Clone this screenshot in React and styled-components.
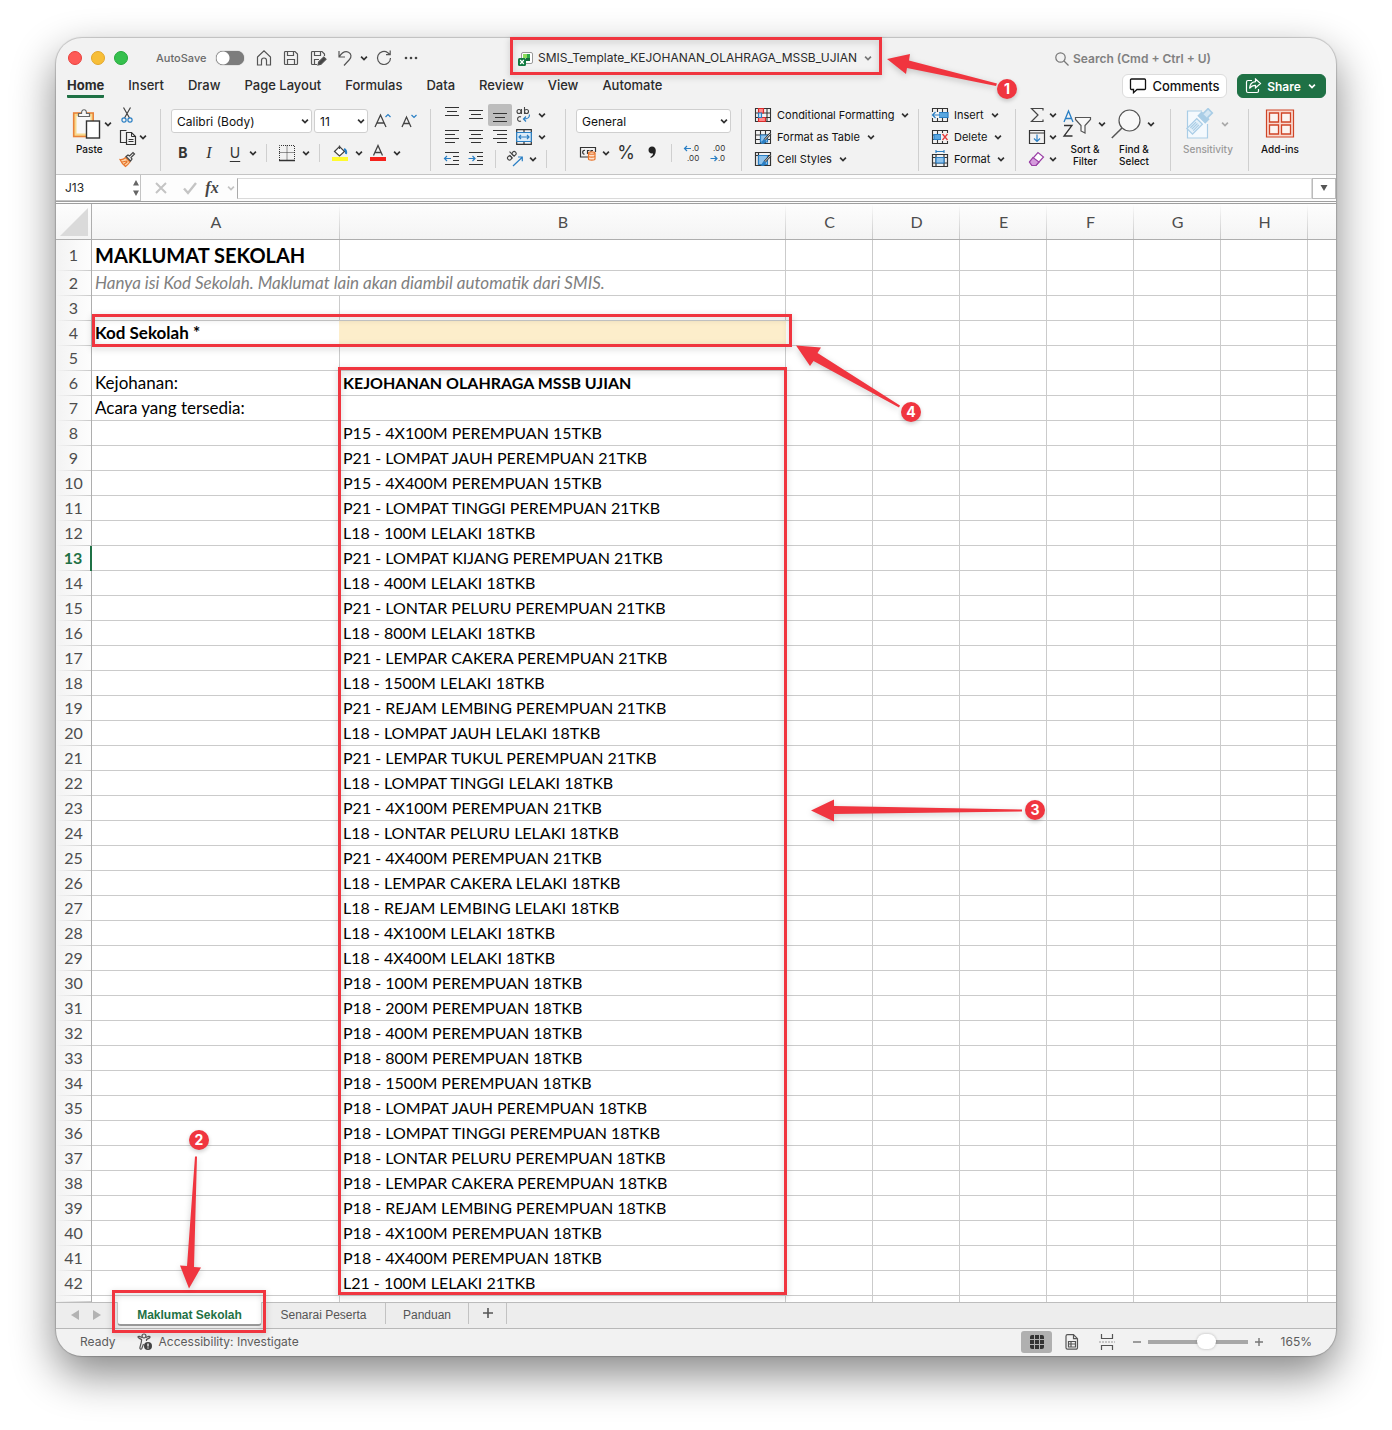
import React from "react";
import styled, { createGlobalStyle, css } from "styled-components";

const ui = `Inter, "Liberation Sans", sans-serif`;
const sheetFont = `Lato, "Liberation Sans", sans-serif`;
const red = "#f0353f";
const green = "#1f7145";

const Global = createGlobalStyle`
  *, *::before, *::after { box-sizing: border-box; }
  body { margin: 0; background: #fff; font-family: ${ui}; color: #262626; }
  button, input, select { font: inherit; color: inherit; }
`;

/* ---------- window ---------- */
const Page = styled.main`
  padding: 38px 56px 74px;
`;
const Stage = styled.div`
  position: relative;
`;
const Frame = styled.div`
  border-radius: 26px;
  overflow: hidden;
  background: #f2f2f2;
  box-shadow: 0 0 1px 1px rgba(0, 0, 0, 0.18), 0 18px 44px rgba(0, 0, 0, 0.48);
`;
const PlainButton = styled.button`
  display: inline-flex;
  align-items: center;
  justify-content: center;
  padding: 0;
  border: 0;
  background: none;
`;

/* ---------- title bar ---------- */
const TitleBar = styled.header`
  display: grid;
  grid-template-columns: 1fr auto 1fr;
  align-items: center;
  height: 36px;
  padding-top: 4px;
`;
const TitleLeft = styled.div`
  display: flex;
  align-items: center;
  padding-left: 12px;
`;
const Light = styled.button`
  width: 14px;
  height: 14px;
  margin-right: 9px;
  padding: 0;
  border: 1px solid ${(p) => p.$edge};
  border-radius: 50%;
  background: ${(p) => p.$fill};
`;
const AutoSave = styled.label`
  display: flex;
  align-items: center;
  gap: 10px;
  margin: 0 6px 0 19px;
  font-size: 11px;
  font-weight: 500;
  line-height: 16px;
  color: #6a6a6a;
`;
const Switch = styled.input`
  appearance: none;
  width: 28px;
  height: 14px;
  margin: 0;
  border-radius: 7px;
  background: radial-gradient(circle at 7px 7px, #fff 6px, transparent 7px), #7c7c7c;
  box-shadow: 0 0 1px #555;
`;
const Quick = styled(PlainButton)`
  width: ${(p) => p.$w || 27}px;
  height: 22px;
  color: #555;
`;
const DocTitle = styled(PlainButton)`
  gap: 5px;
  font-size: 12px;
  line-height: 16px;
  color: #2b2b2b;
  white-space: nowrap;
`;
const Search = styled.label`
  display: flex;
  align-items: center;
  gap: 4px;
  justify-self: end;
  padding: 2px 117px 0 0;
  color: #777;
`;
const SearchInput = styled.input`
  width: 146px;
  padding: 0;
  border: 0;
  outline: 0;
  background: none;
  font-size: 12px;
  font-weight: 600;
  line-height: 20px;
  &::placeholder { color: #808080; opacity: 1; }
`;

/* ---------- ribbon tabs ---------- */
const TabRow = styled.nav`
  display: flex;
  align-items: stretch;
  height: 24px;
  padding: 0 10px 0 11px;
`;
const Tabs = styled.div`
  display: flex;
  gap: 24px;
  flex: 1;
`;
const RibbonTab = styled.a`
  height: 24px;
  border-bottom: 3px solid ${(p) => (p.$active ? green : "transparent")};
  border-radius: 1px;
  font-size: 13px;
  font-weight: ${(p) => (p.$active ? 700 : 500)};
  line-height: 22px;
  color: #2b2b2b;
  text-decoration: none;
  white-space: nowrap;
`;
const Pill = styled(PlainButton)`
  gap: 5px;
  height: 24px;
  width: ${(p) => p.$w}px;
  margin-left: 10px;
  border: 1px solid ${(p) => (p.$primary ? green : "#dcdcdc")};
  border-radius: 6px;
  background: ${(p) => (p.$primary ? green : "#fff")};
  color: ${(p) => (p.$primary ? "#fff" : "#111")};
  font-size: ${(p) => (p.$primary ? 12 : 13)}px;
  font-weight: ${(p) => (p.$primary ? 600 : 500)};
`;

/* ---------- ribbon ---------- */
const Ribbon = styled.section`
  display: flex;
  height: 77px;
  padding: 6px 0 0 6px;
  border-bottom: 1px solid #c4c4c4;
`;
const Group = styled.div`
  display: flex;
  gap: ${(p) => p.$gap || 0}px;
  flex: none;
  width: ${(p) => p.$w}px;
  padding-left: ${(p) => p.$pad}px;
`;
const Divider = styled.span`
  flex: none;
  width: 1px;
  height: 62px;
  margin-top: 5px;
  background: #cfcfcf;
`;
const SmallDivider = styled.span`
  flex: none;
  width: 1px;
  height: 18px;
  margin: 0 7px;
  background: #cfcfcf;
`;
const Stack = styled.div`
  display: flex;
  flex-direction: column;
`;
const TwoRows = styled(Stack)`
  gap: 8px;
  padding-top: 5px;
`;
const Row = styled.div`
  display: flex;
  align-items: center;
  height: ${(p) => p.$h || 22}px;
`;
const Tool = styled(PlainButton)`
  flex: none;
  width: ${(p) => p.$w || 24}px;
  height: 22px;
  border-radius: 2px;
  background: ${(p) => (p.$on ? "#bdbdbd" : "none")};
  color: #333;
  font-size: 14px;
`;
const Letter = styled.span`
  font-size: ${(p) => p.$size || 14}px;
  line-height: 16px;
  ${(p) => p.$bold && css`font-weight: 700;`}
  ${(p) => p.$italic && css`font-family: "Liberation Serif", serif; font-style: italic;`}
  ${(p) => p.$under && css`text-decoration: underline; text-underline-offset: 3px;`}
`;
const SelectBox = styled.label`
  position: relative;
  display: block;
  width: ${(p) => p.$w}px;
  height: 24px;
  margin-right: ${(p) => p.$mr || 0}px;
  svg { position: absolute; right: 1px; top: 6px; pointer-events: none; }
`;
const Select = styled.select`
  appearance: none;
  width: 100%;
  height: 24px;
  padding: 0 5px;
  border: 1px solid #cfcfcf;
  border-radius: 3px;
  background: #fff;
  color: #111;
  font-size: 12px;
`;
const Labelled = styled(PlainButton)`
  justify-content: flex-start;
  gap: 5px;
  height: 22px;
  font-size: 11px;
  color: #111;
  white-space: nowrap;
`;
const Large = styled(PlainButton)`
  flex-direction: column;
  align-items: ${(p) => (p.$start ? "flex-start" : "center")};
  justify-content: flex-start;
  flex: none;
  width: ${(p) => p.$w || 46}px;
  height: 66px;
  padding-top: 3px;
  font-size: 10px;
  font-weight: 500;
  line-height: 12px;
  color: ${(p) => (p.$dim ? "#9a9a9a" : "#111")};
`;
const LargeIcon = styled.span`
  display: flex;
  align-items: center;
  gap: ${(p) => p.$gap || 0}px;
  height: 34px;
  margin-bottom: 2px;
`;
const PasteLabel = styled.span`
  padding-left: 4px;
`;

/* ---------- formula bar ---------- */
const FormulaBar = styled.section`
  display: flex;
  align-items: center;
  height: 29px;
  padding-bottom: 3px;
  background: linear-gradient(#9f9f9f, #9f9f9f) 0 26px / 100% 1px no-repeat,
    linear-gradient(#9f9f9f, #9f9f9f) 0 28px / 100% 1px no-repeat, #fdfdfd;
`;
const NameBox = styled.div`
  display: flex;
  align-items: center;
  width: 85px;
  height: 26px;
  padding-left: 9px;
  border: solid #c4c4c4;
  border-width: 0 1px 1px 0;
  background: #fff;
`;
const NameInput = styled.input`
  flex: 1;
  min-width: 0;
  padding: 0;
  border: 0;
  background: none;
  font-size: 12px;
`;
const FxButton = styled(PlainButton)`
  width: ${(p) => p.$w}px;
  height: 24px;
  color: #c4c4c4;
`;
const Fx = styled.span`
  font: italic 700 16px "Liberation Serif", serif;
  color: #444;
`;
const FormulaInput = styled.input`
  flex: 1;
  min-width: 0;
  height: 21px;
  border: 1px solid #dadada;
  border-left-color: #aaa;
  background: #fff;
`;
const Expand = styled(PlainButton)`
  width: 24px;
  height: 21px;
  border: 1px solid #bbb;
  background: #fff;
  color: #555;
`;

/* ---------- grid ---------- */
const Grid = styled.table`
  width: 100%;
  table-layout: fixed;
  border-collapse: separate;
  border-spacing: 0;
  background: #fff;
  font-family: ${sheetFont};
  font-size: 16px;
  line-height: 20px;
`;
const Corner = styled.td`
  height: 36px;
  padding: 0;
  border: solid #aeaeae;
  border-width: 0 1px 1px 0;
  background: linear-gradient(#fdfdfd, #f4f4f4);
  vertical-align: middle;
  svg { display: block; margin: 0 auto; }
`;
const ColHead = styled.th`
  height: 36px;
  padding: 0;
  border-bottom: 1px solid #aeaeae;
  background: linear-gradient(rgba(200, 200, 200, 0), #c9c9c9) right top / 1px 100% no-repeat,
    linear-gradient(#fdfdfd, #f4f4f4);
  font-weight: 400;
  color: #4d4d4d;
  &:last-child { background: linear-gradient(#fdfdfd, #f4f4f4); }
`;
const RowHead = styled.th`
  height: ${(p) => p.$h}px;
  padding: 0 0 2px;
  border-right: ${(p) => (p.$active ? "2px solid #1f7145" : "1px solid #aeaeae")};
  background: linear-gradient(90deg, rgba(200, 200, 200, 0), #c9c9c9) left bottom / 100% 1px no-repeat,
    linear-gradient(90deg, #f3f3f3, #fdfdfd);
  font-weight: ${(p) => (p.$active ? 700 : 400)};
  color: ${(p) => (p.$active ? green : "#4d4d4d")};
`;
const Cell = styled.td`
  height: ${(p) => p.$h}px;
  padding: 0 3px;
  border: solid #cbcbcb;
  border-width: 0 1px 1px 0;
  color: #000;
  white-space: nowrap;
  overflow: hidden;
  &:last-child { border-right-width: 0; }
  ${(p) => p.$kind === "title" && css`font-size: 20px; font-weight: 700;`}
  ${(p) => p.$kind === "note" && css`font-size: 17px; font-style: italic; color: #808080;`}
  ${(p) => p.$kind === "label" && css`font-size: 17px;`}
  ${(p) => p.$kind === "bold" && css`font-weight: 700;`}
  ${(p) => p.$kind === "fill" && css`background: #fdeecb; border-color: #fdeecb;`}
  ${(p) => p.$kind === "key" && css`font-size: 17px; font-weight: 700; border-right-color: #fdeecb;`}
`;

/* ---------- sheet tabs & status ---------- */
const SheetBar = styled.nav`
  display: flex;
  height: 27px;
  padding-left: 8px;
  background: linear-gradient(#bdbdbd, #bdbdbd) 0 0 / 100% 1px no-repeat, #ededed;
  border-bottom: 1px solid #b8b8b8;
`;
const SheetNav = styled(PlainButton)`
  width: 22px;
  height: 26px;
  color: #b3b3b3;
`;
const SheetTab = styled.button`
  width: ${(p) => p.$w}px;
  height: ${(p) => (p.$active ? 24 : 21)}px;
  margin-left: ${(p) => (p.$active ? 9 : 0)}px;
  margin-top: ${(p) => (p.$active ? 0 : 1)}px;
  padding: ${(p) => (p.$active ? "4px 0 0" : "3px 0 0")};
  border: solid #c2c2c2;
  border-width: ${(p) => (p.$active ? "0 1px 2px" : "0 1px 0 0")};
  border-color: ${(p) => (p.$active ? "#ccc #ccc #999" : "#c2c2c2")};
  border-radius: ${(p) => (p.$active ? "0 0 4px 4px" : "0")};
  background: ${(p) => (p.$active ? "#fff" : "none")};
  color: ${(p) => (p.$active ? "#1f7145" : "#555")};
  font-family: "Liberation Sans", sans-serif;
  font-size: 12px;
  font-weight: ${(p) => (p.$active ? 700 : 400)};
  line-height: 18px;
  white-space: nowrap;
`;
const StatusBar = styled.footer`
  display: flex;
  align-items: center;
  height: 27px;
  padding: 0 24px 2px;
  font-size: 12px;
  line-height: 16px;
  color: #5c5c5c;
`;
const Access = styled(PlainButton)`
  gap: 6px;
  margin-left: 21px;
`;
const Spacer = styled.span`
  flex: 1;
`;
const ViewButton = styled(PlainButton)`
  width: 31px;
  height: 22px;
  margin-right: 4px;
  border-radius: 3px;
  background: ${(p) => (p.$on ? "#b0b0b0" : "none")};
`;
const ZoomStep = styled(PlainButton)`
  width: 22px;
  height: 22px;
  color: #777;
`;
const Zoom = styled.input`
  appearance: none;
  width: 100px;
  height: 16px;
  margin: 0;
  background: linear-gradient(#a8a8a8, #a8a8a8) 0 6px / 100% 4px no-repeat;
  &::-webkit-slider-thumb {
    appearance: none;
    width: 19px;
    height: 15px;
    border-radius: 8px;
    background: #fff;
    box-shadow: 0 0 3px rgba(0, 0, 0, 0.25);
  }
`;
const Percent = styled.output`
  width: 42px;
  text-align: right;
`;

/* ---------- annotations ---------- */
const Callout = styled.div`
  position: absolute;
  left: ${(p) => p.$x}px;
  top: ${(p) => p.$y}px;
  width: ${(p) => p.$w}px;
  height: ${(p) => p.$h}px;
  border: 3px solid ${red};
  filter: drop-shadow(0 2px 3px rgba(0, 0, 0, 0.2));
  pointer-events: none;
`;
const Arrows = styled.svg`
  position: absolute;
  left: 0;
  top: 0;
  width: 1280px;
  height: 1318px;
  pointer-events: none;
  filter: drop-shadow(0 2px 3px rgba(0, 0, 0, 0.2));
`;
const Badge = styled.span`
  position: absolute;
  left: ${(p) => p.$x}px;
  top: ${(p) => p.$y}px;
  width: 20px;
  height: 20px;
  border-radius: 50%;
  background: ${red};
  color: #fff;
  font-size: 14px;
  font-weight: 700;
  line-height: 20px;
  text-align: center;
  box-shadow: 0 2px 4px rgba(0, 0, 0, 0.2);
`;

/* ---------- icons ---------- */
const Svg = ({ w = 18, h = 18, children, ...rest }) => (
  <svg width={w} height={h} viewBox={`0 0 ${w} ${h}`} fill="none" stroke="currentColor" strokeWidth="1.2" aria-hidden="true" {...rest}>
    {children}
  </svg>
);
const Chev = ({ color = "#333" }) => (
  <Svg w={12} h={12} stroke={color} strokeWidth="1.7"><path d="M3.1 4.600 6 7.500l2.900-2.900" /></Svg>
);
const Lines = ({ rows }) => (
  <Svg stroke="#333" w={18} h={18}>
    {rows.map(([x, y, l]) => <path key={y} d={`M${x} ${y}.5h${l}`} />)}
  </Svg>
);
const blue = "#2a7fc4";

const HomeIcon = () => <Svg><path d="M2.5 8 9 1.8 15.500 8v8h-4v-4.500a2.500 2.500 0 0 0-5 0V16h-4z" /></Svg>;
const SaveIcon = () => <Svg><path d="M3.500 2.500h9.500l2.500 2.500v9.500a1 1 0 0 1-1 1h-11a1 1 0 0 1-1-1v-11a1 1 0 0 1 1-1zM5.500 2.500v4h6v-4M5.500 15.500v-5h7v5" /></Svg>;
const SaveAsIcon = () => (
  <Svg><path d="M8 15.500H3.500a1 1 0 0 1-1-1v-11a1 1 0 0 1 1-1h9.500l2.500 2.500v2M5.500 2.500v4h6v-4M5.500 15v-4.500H10" /><path d="M9 16l.8-3.200 5-4.800 2.200 2.200-5 5z" fill="#444" /></Svg>
);
const UndoIcon = () => <Svg><path d="M3 2v6h6M3.200 7.800C6 3.500 9.500 2 12.500 3.200c3 1.500 3.200 5 1 7.300L8 16.500" /></Svg>;
const RedoIcon = () => <Svg><path d="M15.500 9A6.500 6.500 0 1 1 12.800 3.700L15 5.500M15.200 1.500v4.200h-4.200" /></Svg>;
const Dots = () => <Svg fill="#444" stroke="none"><circle cx="4" cy="9" r="1.300" /><circle cx="9" cy="9" r="1.300" /><circle cx="14" cy="9" r="1.300" /></Svg>;
const FileIcon = () => (
  <Svg w={15} h={15} stroke="none">
    <rect x="3.500" y="1.500" width="11" height="11" rx="1.500" fill="#fff" stroke="#999" strokeWidth="1" />
    <path d="M5 3h4v4H5z" fill="#8ddc5c" /><path d="M9 3h3v4H9z" fill="#2fa84a" /><path d="M8 7h4v3H8z" fill="#156b3a" />
    <rect x="0" y="7" width="8" height="8" rx="1.500" fill="#107c41" />
    <path d="M2.200 9l3.600 4M5.800 9l-3.600 4" stroke="#fff" strokeWidth="1.200" />
  </Svg>
);
const Magnifier = () => <Svg w={14} h={14}><circle cx="5.500" cy="5.500" r="4.700" /><path d="M9 9l4.500 4.500" /></Svg>;
const CommentIcon = () => <Svg w={18} h={16} strokeWidth="1.300"><path d="M2.500 1h13a1 1 0 0 1 1 1v8.500a1 1 0 0 1-1 1H8l-3.500 3.200v-3.200h-2a1 1 0 0 1-1-1V2a1 1 0 0 1 1-1z" /></Svg>;
const ShareIcon = () => <Svg w={17} h={16}><path d="M7 2.500H3A1.500 1.500 0 0 0 1.500 4v9A1.500 1.500 0 0 0 3 14.500h9A1.500 1.500 0 0 0 13.500 13v-2" /><path d="M10.500 1l5 4.500-5 4.500V7.300C8 7.300 6 8.200 4.500 10.500 4.800 6.500 7 4 10.500 3.700z" /></Svg>;

const PasteIcon = () => (
  <Svg w={30} h={32}>
    <rect x="1.700" y="5" width="19.500" height="23.500" fill="#f9d98c" stroke="#e8833a" strokeWidth="1.600" />
    <rect x="4.500" y="8" width="14" height="17.500" fill="#f8f8f8" stroke="none" />
    <path d="M6.500 8.500v-3h3c0-5 5-5 5 0h3v3z" fill="#f8f8f8" stroke="#666" />
    <rect x="14.500" y="13" width="13" height="17" fill="#fff" stroke="#333" strokeWidth="1.400" />
  </Svg>
);
const CutIcon = () => <Svg><path d="M5.500 1.500 11.500 12M12.500 1.500 6.500 12" stroke="#444" /><circle cx="6" cy="14" r="2.100" stroke={blue} /><circle cx="12" cy="14" r="2.100" stroke={blue} /></Svg>;
const CopyIcon = () => (
  <Svg stroke="#333"><path d="M7 14.500H1.500v-12H7.500M7.500 4.500h5l4 4v8h-9z" /><path d="M12.500 4.500v4h4M9.500 11.500h5M9.500 13.500h5" strokeWidth="1" /></Svg>
);
const BrushIcon = () => (
  <Svg><path d="M2 9.500c3 .5 4-.5 5.500-2l4.500 4.500c-1.500 2-3 3.500-4.500 4.500-2-1.500-4-3.500-5.500-7z" fill="#fbd3a6" stroke="#e8762d" /><path d="M4 12l5-1M6 14.500l3.500-3" stroke="#e8762d" /><path d="M8 6.500l2-1.500 1.500 1L15 2.500l1.500 1.500L13 7.500l1 1.500-1.500 2z" fill="#eee" stroke="#444" /></Svg>
);
const GrowFont = ({ down }) => (
  <Svg w={20} h={18}>
    {down ? <><path d="M4 15 8.500 5 13 15M5.500 11.500h6" stroke="#444" strokeWidth="1.300" /><path d="M13.500 3l2.500 2.500L18.500 3" stroke={blue} /></>
      : <><path d="M3 15 8.500 3 14 15M5 11h7" stroke="#444" strokeWidth="1.300" /><path d="M13.500 5l2.500-2.500L18.500 5" stroke={blue} /></>}
  </Svg>
);
const BorderIcon = () => <Svg stroke="#333"><path d="M1.500 16V1.500h15V16M9 1.500V16M1.500 8.500h15" strokeDasharray="1 1" strokeWidth="1" /><path d="M1 16.500h16" strokeWidth="1.500" /></Svg>;
const FillIcon = () => (
  <Svg><path d="M3.500 7.500 8.500 2.500l5 5-5 4.500z" fill="#fff" stroke="#444" /><path d="M8.500 5V1.500" stroke="#444" /><path d="M13 5c2 1 2.500 3 2 5" stroke={blue} strokeWidth="2" /><path d="M1 13h16v4H1z" fill="#fffb2e" stroke="none" /></Svg>
);
const FontColor = () => <Svg><path d="M4.500 11.500 9 1.500l4.500 10M6 8.500h6" stroke="#444" strokeWidth="1.300" /><path d="M1 13h16v4H1z" fill="#f5221c" stroke="none" /></Svg>;
const WrapIcon = () => (
  <Svg><g stroke="#444" strokeWidth="1.100"><circle cx="4" cy="5.500" r="2" /><path d="M6.500 3v5M9.500 1v7" /><circle cx="11.500" cy="5.500" r="2" /><path d="M6 11a2.300 2.300 0 1 0 0 4" /></g><path d="M14.500 8.500c0 3-1 4.500-6 4.500M11 10.500 8.500 13l2.500 2.500" stroke={blue} /></Svg>
);
const MergeIcon = () => <Svg w={16} h={16}><path d="M.700.700h14.600v14.600H.700zM8 1v2.500M8 12.500V15" stroke="#333" /><path d="M.700 3.500h14.600v9H.700z" fill="#dcecf8" stroke={blue} /><path d="M3 8h10M5 6 3 8l2 2M11 6l2 2-2 2" stroke={blue} /></Svg>;
const IndentIcon = ({ out }) => (
  <Svg><path d="M2 2.500h14M10 6.500h6M10 10.500h6M2 14.500h14" stroke="#333" />{out ? <path d="M8 8.500H1.500M4 6 1.500 8.500 4 11" stroke={blue} /> : <path d="M1.500 8.500H8M5.500 6 8 8.500 5.500 11" stroke={blue} />}</Svg>
);
const OrientIcon = () => (
  <Svg><g stroke="#444" strokeWidth="1.100" transform="rotate(-45 6 7)"><circle cx="3.500" cy="6" r="2" /><path d="M5.500 4v4.500M8 1.500v7" /><circle cx="10" cy="6" r="2" /></g><path d="M7 16 16 7.500M12 7h4.300v4.300" stroke={blue} /></Svg>
);
const CurrencyIcon = () => (
  <Svg><path d="M9 13H1.500V3.500h15V8M6 6.500c-3-1-3 4-.500 3.500M8.500 10V6.500h2M12 9V6.500h2" stroke="#333" /><path d="M9.500 9c0-1.500 6.500-1.500 6.500 0v6c0 1.500-6.500 1.500-6.500 0z" fill="#fde1cd" stroke="#e8762d" /><path d="M9.500 9.500c1 1 5.500 1 6.500 0M9.500 12.300c1 1 5.500 1 6.500 0" stroke="#e8762d" /></Svg>
);
const Comma = () => <Svg fill="#222" stroke="none"><path d="M9 2.500c2.500 0 3.800 1.800 3.800 4.200 0 3.800-2 6.300-5 7.300l-.5-1c1.700-.800 2.700-2 2.800-3.700-2.500.8-4.600-.8-4.600-3.300C5.500 4 7 2.500 9 2.500z" /></Svg>;
const DecText = styled.text`
  font: 8px ${ui};
  fill: #333;
  stroke: none;
`;
const Decimal = ({ inc }) => (
  <Svg w={18} h={22}>
    {inc ? <><path d="M8 6.500H1.500M4 4 1.500 6.500 4 9" stroke={blue} /><DecText x="9" y="9">.0</DecText><DecText x="4" y="19">.00</DecText></>
      : <><path d="M1.500 16.500H8M5.500 14 8 16.500 5.500 19" stroke={blue} /><DecText x="4" y="9">.00</DecText><DecText x="9" y="19">.0</DecText></>}
  </Svg>
);
const TableBase = () => <path d="M1.500 2.500h15v13h-15zM1.500 7h15M1.500 11.500h15M6.500 2.500v13M11.500 2.500v13" stroke="#333" strokeWidth="1.100" />;
const CondIcon = () => <Svg><path d="M1.500 2.500h15v13h-15zM1.500 7h15M1.500 11.500h15M5.500 2.500v13M13 2.500v13" stroke="#333" strokeWidth="1.100" /><path d="M4.500 2.500h5V7h-5zM4.500 11.500h7v4h-7z" fill="#ff8b8b" stroke="#d92b2b" /><path d="M4.500 7h3v4.500h-3z" fill="#cfe4f6" stroke={blue} /></Svg>;
const FmtTable = ({ solid }) => (
  <Svg>
    {solid ? <path d="M1.500 2.500h15v13h-15zM1.500 5.500h15M4.500 2.500v13" stroke="#333" /> : <TableBase />}
    <path d={solid ? "M4.500 5.500h9v9h-9z" : "M6.500 7h7v7h-7z"} fill="#8fc3ec" stroke={blue} />
    <path d="M16.500 5.500 10.500 12" stroke="#333" strokeWidth="2.400" /><path d="M16.300 5.700 10.500 12" stroke="#fff" strokeWidth=".8" />
    <path d="M10.500 11c-2 0-2 3-4 4.500 3 1 5.500 0 5.500-3z" fill="#2a7fc4" stroke="none" />
  </Svg>
);
const InsertIcon = () => <Svg><TableBase /><path d="M7 6.500h10v5H7z" fill="#5aa7e0" stroke={blue} /><path d="M1 6h7v6H1z" fill="#f2f2f2" stroke="none" /><path d="M9 9H1.500M4.500 6 1.500 9l3 3" stroke={blue} /></Svg>;
const DeleteIcon = () => <Svg><TableBase /><path d="M3 6.500h7v5H3z" fill="#5aa7e0" stroke={blue} /><path d="M10 5h8v8h-8z" fill="#f2f2f2" stroke="none" /><path d="M11.500 6l5 6M16.500 6l-5 6" stroke="#e23b3b" strokeWidth="1.300" /></Svg>;
const FormatIcon = () => <Svg><path d="M1.500 4.500h15v12h-15zM1.500 7.500h15M1.500 13h15M5 4.500v12M13 4.500v12" stroke="#333" /><path d="M5 7.500h8V13H5z" fill="#8fc3ec" stroke={blue} /><path d="M5 1.500h8M5 0v3M13 0v3" stroke={blue} /></Svg>;
const SigmaIcon = () => <Svg><path d="M15 4.500v-2H3.500L10 9l-6.500 6.500H15v-2" stroke="#444" /></Svg>;
const FillDown = () => <Svg><path d="M1.500 2.500h15v13h-15zM1.500 5h15" stroke="#333" /><path d="M9 6.500V13M6 10.500 9 13.500l3-3" stroke={blue} /></Svg>;
const Eraser = () => <Svg><path d="M1.500 12 10 2.500l5.500 4.500L8 15.500H4z" fill="#fff" stroke="#9a3fa5" /><path d="M1.500 12 5 7.500l6 4.500-3 3.500H4z" fill="#d59bdc" stroke="#9a3fa5" /></Svg>;
const SortIcon = () => (
  <Svg w={30} h={32}><path d="M2 14 6.500 3 11 14M3.500 10.500h6" stroke={blue} strokeWidth="1.300" /><path d="M2 17.500h8L2 28h8.500" stroke="#333" strokeWidth="1.300" /><path d="M13.500 9.500h15v2l-5.500 6v7.500l-4-2v-5.500l-5.500-6z" fill="#f8f8f8" stroke="#555" /></Svg>
);
const FindIcon = () => <Svg w={30} h={32} stroke="#555"><circle cx="18.500" cy="12.500" r="10.500" fill="#f8f8f8" /><path d="M11 20 .800 30" strokeWidth="1.500" /></Svg>;
const SensIcon = () => (
  <Svg w={30} h={32} stroke="#a9cde6"><path d="M17 3H2.500v27h20V16" fill="#f4f9fd" /><g transform="rotate(45 16 12)"><rect x="12" y="14" width="8" height="14" fill="#e4f0f9" /><path d="M14 17v8M16 17v8M18 17v8" /><rect x="11" y="6" width="10" height="5" fill="#a9cde6" /><path d="M13 6V-1h6v7" fill="#d4e7f4" strokeWidth="1.600" /></g></Svg>
);
const AddinsIcon = () => (
  <Svg w={30} h={32}><path d="M1.500 2h27v27h-27z" fill="#f9d8cf" stroke="#cf4426" /><path d="M4.500 5h9v9h-9zM16.500 5h9v9h-9zM4.500 17h9v9h-9zM16.500 17h9v9h-9z" fill="#fbf3f0" stroke="#cf4426" strokeWidth="1.300" /></Svg>
);
const Spinner = () => <Svg w={8} h={18} fill="#666" stroke="none"><path d="M4 1l3 5.500H1zM4 17l3-5.500H1z" /></Svg>;
const AccessIcon = () => (
  <Svg w={16} h={18} stroke="#555"><circle cx="7" cy="3" r="2" /><path d="M5 4.500C3 3.500 1.500 2.800 1 3.800s1.500 1.500 3.500 2.700c.5 2-1.200 6-1.700 8.500 0 1.200 1.500 1.400 2 .5L6.500 11M9 4.500c2-1 3.500-1.700 4-.700s-1.500 1.500-3.500 2.700V8" /><circle cx="11" cy="13" r="4" fill="#444" stroke="none" /><path d="M11 10.500v3M11 14.500v1" stroke="#fff" strokeWidth="1.300" /></Svg>
);
const NormalView = () => <Svg w={16} h={16}><rect x="1" y="1" width="14" height="14" rx="2" fill="#333" stroke="none" /><path d="M5.500 1v14M10.500 1v14M1 5.500h14M1 10.500h14" stroke="#b0b0b0" strokeWidth="1" /></Svg>;
const PageView = () => <Svg w={14} h={16} stroke="#555"><path d="M2.500.700h6l4 4v9a1.500 1.500 0 0 1-1.500 1.500H2.500A1.500 1.500 0 0 1 1 13.700v-11.500A1.500 1.500 0 0 1 2.500.700zM8.500.700v4h4M3.500 7.500h7v5.500h-7zM3.500 10h7M6 7.500V13" /></Svg>;
const BreakView = () => <Svg w={16} h={16} stroke="#555"><path d="M2.500 0v4.500h11V0M2.500 16v-4.500h11V16" /><path d="M0 8h16" strokeDasharray="2 1" stroke="#999" /></Svg>;

/* ---------- data ---------- */
const events = [
  "P15 - 4X100M PEREMPUAN 15TKB", "P21 - LOMPAT JAUH PEREMPUAN 21TKB", "P15 - 4X400M PEREMPUAN 15TKB",
  "P21 - LOMPAT TINGGI PEREMPUAN 21TKB", "L18 - 100M LELAKI 18TKB", "P21 - LOMPAT KIJANG PEREMPUAN 21TKB",
  "L18 - 400M LELAKI 18TKB", "P21 - LONTAR PELURU PEREMPUAN 21TKB", "L18 - 800M LELAKI 18TKB",
  "P21 - LEMPAR CAKERA PEREMPUAN 21TKB", "L18 - 1500M LELAKI 18TKB", "P21 - REJAM LEMBING PEREMPUAN 21TKB",
  "L18 - LOMPAT JAUH LELAKI 18TKB", "P21 - LEMPAR TUKUL PEREMPUAN 21TKB", "L18 - LOMPAT TINGGI LELAKI 18TKB",
  "P21 - 4X100M PEREMPUAN 21TKB", "L18 - LONTAR PELURU LELAKI 18TKB", "P21 - 4X400M PEREMPUAN 21TKB",
  "L18 - LEMPAR CAKERA LELAKI 18TKB", "L18 - REJAM LEMBING LELAKI 18TKB", "L18 - 4X100M LELAKI 18TKB",
  "L18 - 4X400M LELAKI 18TKB", "P18 - 100M PEREMPUAN 18TKB", "P18 - 200M PEREMPUAN 18TKB",
  "P18 - 400M PEREMPUAN 18TKB", "P18 - 800M PEREMPUAN 18TKB", "P18 - 1500M PEREMPUAN 18TKB",
  "P18 - LOMPAT JAUH PEREMPUAN 18TKB", "P18 - LOMPAT TINGGI PEREMPUAN 18TKB", "P18 - LONTAR PELURU PEREMPUAN 18TKB",
  "P18 - LEMPAR CAKERA PEREMPUAN 18TKB", "P18 - REJAM LEMBING PEREMPUAN 18TKB", "P18 - 4X100M PEREMPUAN 18TKB",
  "P18 - 4X400M PEREMPUAN 18TKB", "L21 - 100M LELAKI 21TKB",
];
const rows = [
  { a: "MAKLUMAT SEKOLAH", aKind: "title", h: 31 },
  { a: "Hanya isi Kod Sekolah. Maklumat lain akan diambil automatik dari SMIS.", aKind: "note", wide: true },
  {},
  { a: "Kod Sekolah *", aKind: "key", bKind: "fill" },
  {},
  { a: "Kejohanan:", aKind: "label", b: "KEJOHANAN OLAHRAGA MSSB UJIAN", bKind: "bold" },
  { a: "Acara yang tersedia:", aKind: "label" },
  ...events.map((b) => ({ b })),
];
const columns = ["A", "B", "C", "D", "E", "F", "G", "H", ""];
const rest = columns.slice(2);
const activeRow = 13;

const TopBar = () => (
  <TitleBar>
    <TitleLeft>
      <Light aria-label="Close" $fill="#fe5b57" $edge="#e8403c" />
      <Light aria-label="Minimize" $fill="#f7be37" $edge="#e2a72a" />
      <Light aria-label="Zoom window" $fill="#35c04d" $edge="#26a83c" />
      <AutoSave>AutoSave<Switch type="checkbox" role="switch" /></AutoSave>
      <Quick aria-label="Home"><HomeIcon /></Quick>
      <Quick aria-label="Save"><SaveIcon /></Quick>
      <Quick aria-label="Save as"><SaveAsIcon /></Quick>
      <Quick aria-label="Undo"><UndoIcon /></Quick>
      <Quick aria-label="Undo options" $w={12}><Chev /></Quick>
      <Quick aria-label="Redo"><RedoIcon /></Quick>
      <Quick aria-label="More"><Dots /></Quick>
    </TitleLeft>
    <DocTitle><FileIcon />SMIS_Template_KEJOHANAN_OLAHRAGA_MSSB_UJIAN<Chev color="#777" /></DocTitle>
    <Search>
      <Magnifier />
      <SearchInput type="text" aria-label="Search" placeholder="Search (Cmd + Ctrl + U)" />
    </Search>
  </TitleBar>
);

const MainRibbon = () => (
  <Ribbon>
    <Group $pad={10} $w={98} $gap={2}>
      <Large $w={44} $start><LargeIcon><PasteIcon /><Chev /></LargeIcon><PasteLabel>Paste</PasteLabel></Large>
      <Stack>
        <Row><Tool $w={18} aria-label="Cut"><CutIcon /></Tool></Row>
        <Row><Tool $w={32} aria-label="Copy"><CopyIcon /><Chev /></Tool></Row>
        <Row><Tool $w={18} aria-label="Format painter"><BrushIcon /></Tool></Row>
      </Stack>
    </Group>
    <Divider />
    <Group $pad={10} $w={269}>
      <TwoRows>
        <Row $h={24}>
          <SelectBox $w={141} $mr={2}><Select aria-label="Font"><option>Calibri (Body)</option></Select><Chev /></SelectBox>
          <SelectBox $w={54}><Select aria-label="Font size"><option>11</option></Select><Chev /></SelectBox>
          <Tool $w={28} aria-label="Increase font size"><GrowFont /></Tool>
          <Tool aria-label="Decrease font size"><GrowFont down /></Tool>
        </Row>
        <Row $h={24}>
          <Tool><Letter $bold>B</Letter></Tool>
          <Tool $w={28}><Letter $italic $size={16}>I</Letter></Tool>
          <Tool><Letter $under>U</Letter></Tool>
          <Chev />
          <SmallDivider />
          <Tool $w={26} aria-label="Borders"><BorderIcon /></Tool><Chev />
          <SmallDivider />
          <Tool $w={26} aria-label="Fill colour"><FillIcon /></Tool><Chev />
          <Tool $w={26} aria-label="Font colour"><FontColor /></Tool><Chev />
        </Row>
      </TwoRows>
    </Group>
    <Divider />
    <Group $pad={9} $w={134}>
      <Stack>
        <Row>
          <Tool aria-label="Top align"><Lines rows={[[2, 1, 14], [4, 5, 10], [2, 9, 14]]} /></Tool>
          <Tool aria-label="Middle align"><Lines rows={[[2, 4, 14], [4, 8, 10], [2, 12, 14]]} /></Tool>
          <Tool aria-label="Bottom align" $on><Lines rows={[[2, 7, 14], [4, 11, 10], [2, 15, 14]]} /></Tool>
          <Tool aria-label="Wrap text"><WrapIcon /></Tool><Chev />
        </Row>
        <Row>
          <Tool aria-label="Align left"><Lines rows={[[2, 2, 14], [2, 6, 10], [2, 10, 14], [2, 14, 10]]} /></Tool>
          <Tool aria-label="Align centre"><Lines rows={[[2, 2, 14], [4, 6, 10], [2, 10, 14], [4, 14, 10]]} /></Tool>
          <Tool aria-label="Align right"><Lines rows={[[2, 2, 14], [6, 6, 10], [2, 10, 14], [6, 14, 10]]} /></Tool>
          <Tool aria-label="Merge"><MergeIcon /></Tool><Chev />
        </Row>
        <Row>
          <Tool aria-label="Decrease indent"><IndentIcon out /></Tool>
          <Tool aria-label="Increase indent"><IndentIcon /></Tool>
          <SmallDivider />
          <Tool aria-label="Orientation"><OrientIcon /></Tool><Chev />
          <SmallDivider />
        </Row>
      </Stack>
    </Group>
    <Divider />
    <Group $pad={10} $w={175}>
      <TwoRows>
        <Row $h={24}>
          <SelectBox $w={155}><Select aria-label="Number format"><option>General</option></Select><Chev /></SelectBox>
        </Row>
        <Row $h={24}>
          <Tool aria-label="Currency"><CurrencyIcon /></Tool><Chev />
          <Tool $w={28}><Letter $size={18}>%</Letter></Tool>
          <Tool aria-label="Comma style"><Comma /></Tool>
          <SmallDivider />
          <Tool $w={26} aria-label="Increase decimal"><Decimal inc /></Tool>
          <Tool $w={26} aria-label="Decrease decimal"><Decimal /></Tool>
        </Row>
      </TwoRows>
    </Group>
    <Divider />
    <Group $pad={12} $w={176}>
      <Stack>
        <Labelled><CondIcon />Conditional Formatting <Chev /></Labelled>
        <Labelled><FmtTable />Format as Table <Chev /></Labelled>
        <Labelled><FmtTable solid />Cell Styles <Chev /></Labelled>
      </Stack>
    </Group>
    <Divider />
    <Group $pad={12} $w={96}>
      <Stack>
        <Labelled><InsertIcon />Insert <Chev /></Labelled>
        <Labelled><DeleteIcon />Delete <Chev /></Labelled>
        <Labelled><FormatIcon />Format <Chev /></Labelled>
      </Stack>
    </Group>
    <Divider />
    <Group $pad={11} $w={154} $gap={3}>
      <Stack>
        <Row><Tool $w={20} aria-label="AutoSum"><SigmaIcon /></Tool><Chev /></Row>
        <Row><Tool $w={20} aria-label="Fill"><FillDown /></Tool><Chev /></Row>
        <Row><Tool $w={20} aria-label="Clear"><Eraser /></Tool><Chev /></Row>
      </Stack>
      <Large><LargeIcon $gap={4}><SortIcon /><Chev /></LargeIcon>Sort &amp;<br />Filter</Large>
      <Large><LargeIcon $gap={4}><FindIcon /><Chev /></LargeIcon>Find &amp;<br />Select</Large>
    </Group>
    <Divider />
    <Group $pad={10} $w={77}>
      <Large $w={54} $dim><LargeIcon $gap={4}><SensIcon /><Chev color="#aaa" /></LargeIcon>Sensitivity</Large>
    </Group>
    <Divider />
    <Group $pad={8} $w={64}>
      <Large><LargeIcon><AddinsIcon /></LargeIcon>Add-ins</Large>
    </Group>
  </Ribbon>
);

const Sheet = () => (
  <Grid>
    <colgroup>
      <col style={{ width: 36 }} /><col style={{ width: 248 }} /><col style={{ width: 446 }} />
      {rest.map((c) => <col key={c} style={c ? { width: 87 } : undefined} />)}
    </colgroup>
    <thead>
      <tr>
        <Corner><Svg w={30} h={30} stroke="none"><path d="M29 1v28H1z" fill="#dadada" /></Svg></Corner>
        {columns.map((c) => <ColHead key={c} scope="col">{c}</ColHead>)}
      </tr>
    </thead>
    <tbody>
      {rows.map(({ a, b, aKind, bKind, wide, h = 25 }, i) => (
        <tr key={i}>
          <RowHead scope="row" $h={h} $active={i + 1 === activeRow}>{i + 1}</RowHead>
          <Cell $h={h} $kind={aKind} colSpan={wide ? 2 : 1}>{a}</Cell>
          {!wide && <Cell $h={h} $kind={bKind}>{b}</Cell>}
          {rest.map((c) => <Cell key={c} $h={h} />)}
        </tr>
      ))}
      <tr>
        <RowHead $h={6} as="td" />
        {columns.map((c) => <Cell key={c} $h={6} style={{ borderBottomWidth: 0 }} />)}
      </tr>
    </tbody>
  </Grid>
);

export default function App() {
  return (
    <Page>
      <Global />
      <Stage>
        <Frame>
          <TopBar />
          <TabRow>
            <Tabs>
              {["Home", "Insert", "Draw", "Page Layout", "Formulas", "Data", "Review", "View", "Automate"].map((t, i) => (
                <RibbonTab key={t} href="#" $active={i === 0}>{t}</RibbonTab>
              ))}
            </Tabs>
            <Pill $w={105}><CommentIcon />Comments</Pill>
            <Pill $w={89} $primary><ShareIcon />Share<Chev color="#fff" /></Pill>
          </TabRow>
          <MainRibbon />
          <FormulaBar>
            <NameBox><NameInput aria-label="Name box" defaultValue="J13" /><Spinner /></NameBox>
            <FxButton $w={40} aria-label="Cancel"><Svg w={14} h={14} strokeWidth="2"><path d="M2 2l10 10M12 2 2 12" /></Svg></FxButton>
            <FxButton $w={18} aria-label="Enter"><Svg w={16} h={14} strokeWidth="2.400"><path d="M2 7.500 6 12l8-10" /></Svg></FxButton>
            <FxButton $w={26} aria-label="Insert function"><Fx>fx</Fx></FxButton>
            <Chev color="#c4c4c4" />
            <FormulaInput aria-label="Formula" />
            <Expand aria-label="Expand formula bar"><Svg w={8} h={8} fill="#555" stroke="none"><path d="M.500 1h7L4 7z" /></Svg></Expand>
          </FormulaBar>
          <Sheet />
          <SheetBar>
            <SheetNav aria-label="Previous sheet"><Svg w={10} h={12} fill="#b3b3b3" stroke="none"><path d="M9 1v10L1 6z" /></Svg></SheetNav>
            <SheetNav aria-label="Next sheet"><Svg w={10} h={12} fill="#b3b3b3" stroke="none"><path d="M1 1v10l8-5z" /></Svg></SheetNav>
            <SheetTab $w={145} $active>Maklumat Sekolah</SheetTab>
            <SheetTab $w={124}>Senarai Peserta</SheetTab>
            <SheetTab $w={83}>Panduan</SheetTab>
            <SheetTab $w={38} aria-label="Add sheet"><Svg w={12} h={12} strokeWidth="1.600"><path d="M6 1v10M1 6h10" /></Svg></SheetTab>
          </SheetBar>
          <StatusBar>
            <span>Ready</span>
            <Access><AccessIcon />Accessibility: Investigate</Access>
            <Spacer />
            <ViewButton $on aria-label="Normal view"><NormalView /></ViewButton>
            <ViewButton aria-label="Page layout view"><PageView /></ViewButton>
            <ViewButton aria-label="Page break view"><BreakView /></ViewButton>
            <ZoomStep aria-label="Zoom out"><Svg w={10} h={10} strokeWidth="1.400"><path d="M1 5h8" /></Svg></ZoomStep>
            <Zoom type="range" aria-label="Zoom" min="0" max="100" defaultValue="61" />
            <ZoomStep aria-label="Zoom in"><Svg w={10} h={10} strokeWidth="1.400"><path d="M1 5h8M5 1v8" /></Svg></ZoomStep>
            <Percent>165%</Percent>
          </StatusBar>
        </Frame>
        <Callout $x={454} $y={-1} $w={372} $h={38} />
        <Callout $x={36} $y={276} $w={700} $h={33} />
        <Callout $x={282} $y={329} $w={449} $h={928} />
        <Callout $x={56} $y={1252} $w={154} $h={43} />
        <Arrows aria-hidden="true" fill={red}>
          <g transform="translate(-56 -38)">
            <path d="M887 59 910 54 909 60.500 997 83.500 996 86 907 68 906 74z" />
            <path d="M189 1288.500 180 1265.500 187 1266 195 1156.500h2L194 1267l7 .5z" />
            <path d="M811 810.500 834 799.500V806L1022 809.500v2L834 814v7.500z" />
            <path d="M796 345.500 821 347.500 817.500 353 900 405.500 899 407.500 813.500 361 810 366z" />
          </g>
        </Arrows>
        <Badge $x={941} $y={41}>1</Badge>
        <Badge $x={133} $y={1092}>2</Badge>
        <Badge $x={969} $y={762}>3</Badge>
        <Badge $x={845} $y={364}>4</Badge>
      </Stage>
    </Page>
  );
}
